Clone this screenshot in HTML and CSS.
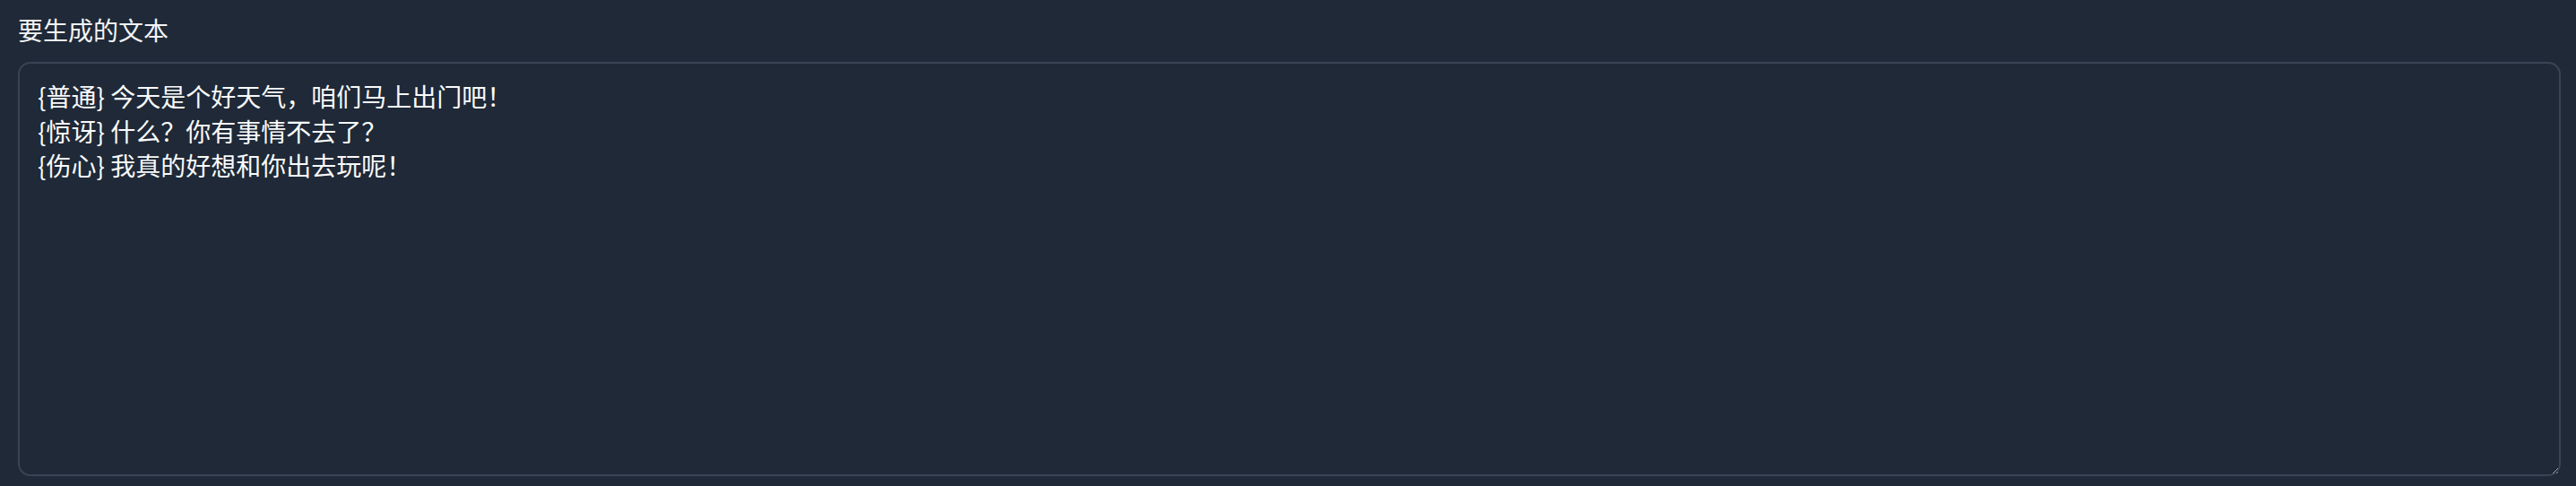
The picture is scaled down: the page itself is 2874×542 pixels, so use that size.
FILE: index.html
```html
<!DOCTYPE html>
<html lang="zh-CN">
<head>
<meta charset="utf-8">
<title>要生成的文本</title>
<link rel="stylesheet" href="styles.css">
</head>
<body>
<div class="field">
<label class="field-label" for="gen-text">要生成的文本</label>
<textarea class="field-input" id="gen-text">{普通} 今天是个好天气，咱们马上出门吧！
{惊讶} 什么？你有事情不去了？
{伤心} 我真的好想和你出去玩呢！</textarea>
</div>
</body>
</html>
```

FILE: styles.css
```css
html, body {
  margin: 0;
  padding: 0;
  background: #1f2937;
  height: 100%;
}

body {
  font-family: "Noto Sans CJK SC", "Noto Sans", sans-serif;
  color: #f3f4f6;
  overflow: hidden;
}

.field {
  display: flex;
  flex-direction: column;
  padding: 13px 17px 0 20px;
}

.field-label {
  font-size: 28px;
  line-height: 40px;
  color: #f3f4f6;
  margin-bottom: 16px;
}

.field-input {
  box-sizing: border-box;
  width: 100%;
  height: 462px;
  margin: 0;
  padding: 17px 20px;
  background: #1f2937;
  color: #f9fafb;
  border: 2px solid #3a4455;
  border-radius: 14px;
  font-family: "Noto Sans CJK SC", "Noto Sans", sans-serif;
  font-size: 28px;
  line-height: 38.5px;
  outline: none;
}
```
